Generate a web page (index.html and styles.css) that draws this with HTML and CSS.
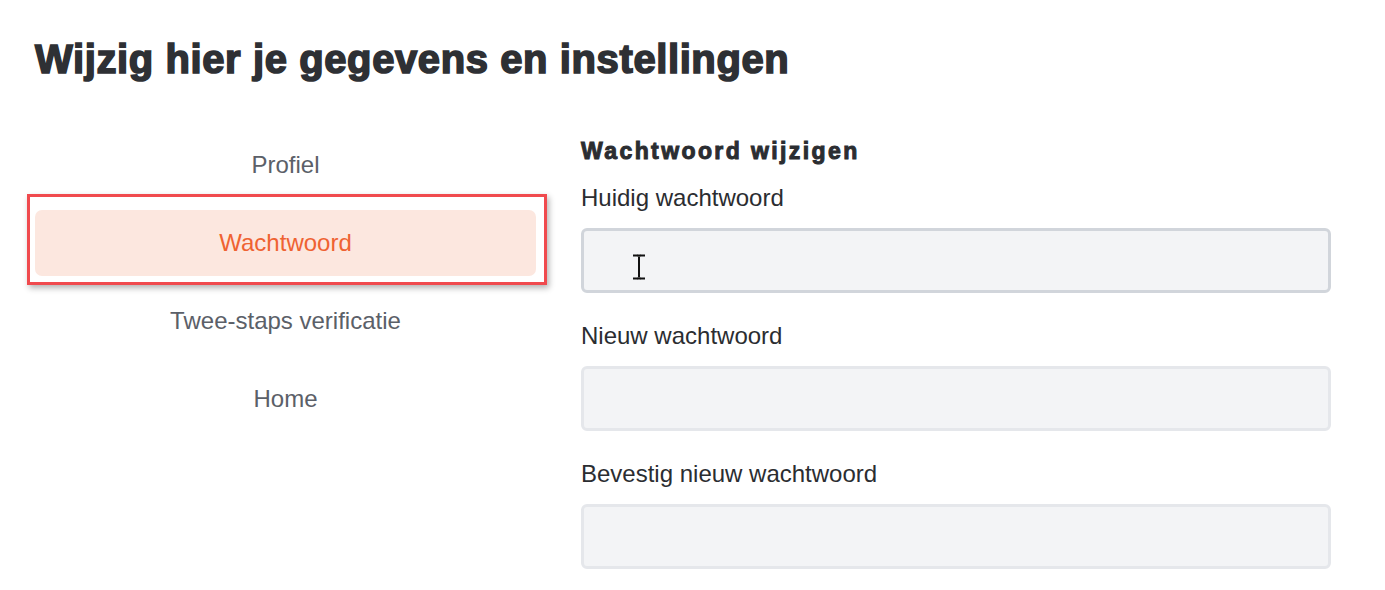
FILE: index.html
```html
<!DOCTYPE html>
<html lang="nl">
<head>
<meta charset="utf-8">
<title>Instellingen</title>
<link rel="stylesheet" href="styles.css">
</head>
<body>
<div class="page">
  <h1 class="title">Wijzig hier je gegevens en instellingen</h1>
  <div class="layout">
    <nav class="nav">
      <a class="nav-item">Profiel</a>
      <a class="nav-item active">Wachtwoord<span class="highlight"></span></a>
      <a class="nav-item">Twee-staps verificatie</a>
      <a class="nav-item">Home</a>
    </nav>
    <form class="form">
      <h2 class="section-title">Wachtwoord wijzigen</h2>
      <div class="field">
        <label class="label">Huidig wachtwoord</label>
        <div class="input-wrap">
          <input class="input focused" type="password">
          <svg class="cursor" width="14" height="26" viewBox="0 0 14 26"><path d="M1 1.5h4.5M8.5 1.5H13M1 24.5h4.5M8.5 24.5H13M7 2.5v21" stroke="#111" stroke-width="2" fill="none"/><path d="M5 1.5h4M5 24.5h4" stroke="#111" stroke-width="2"/></svg>
        </div>
      </div>
      <div class="field">
        <label class="label">Nieuw wachtwoord</label>
        <input class="input" type="password">
      </div>
      <div class="field">
        <label class="label">Bevestig nieuw wachtwoord</label>
        <input class="input" type="password">
      </div>
    </form>
  </div>
</div>
</body>
</html>
```
FILE: styles.css
```css
* { box-sizing: border-box; }
html, body { margin: 0; padding: 0; background: #fff; }
body { font-family: "Liberation Sans", Arial, sans-serif; color: #2b2d31; overflow: hidden; }
.page { padding: 36px 54px 0 35px; }
.title {
  margin: 0;
  font-size: 40px;
  line-height: 46px;
  font-weight: 700;
  color: #2e3034;
  -webkit-text-stroke: 1.6px #2e3034;
  letter-spacing: 0.6px;
}
.layout { display: flex; gap: 45px; margin-top: 50px; }
.nav { width: 501px; display: flex; flex-direction: column; gap: 12px; }
.nav-item {
  position: relative;
  height: 66px;
  display: flex;
  align-items: center;
  justify-content: center;
  font-size: 24px;
  color: #5b6068;
  border-radius: 7px;
  cursor: pointer;
}
.nav-item.active { background: #fce7df; color: #ef6232; }
.highlight {
  position: absolute;
  left: -8px; right: -11px; top: -16px; bottom: -9px;
  border: 3px solid #f04a4e;
  box-shadow: 2px 3px 6px rgba(0,0,0,0.3);
  pointer-events: none;
}
.form { flex: 1; margin: 0; padding-top: 6px; }
.section-title {
  margin: 0 0 20px;
  font-size: 23px;
  line-height: 26px;
  font-weight: 700;
  color: #2b2d31;
  -webkit-text-stroke: 1px #2b2d31;
  letter-spacing: 2.4px;
}
.field { display: flex; flex-direction: column; margin-bottom: 29px; }
.label { font-size: 24px; line-height: 28px; margin-bottom: 16px; color: #2b2d31; }
.input-wrap { position: relative; }
.input {
  display: block;
  width: 100%;
  height: 65px;
  background: #f3f4f6;
  border: 3px solid #e5e7eb;
  border-radius: 6px;
  outline: none;
  font-size: 20px;
  padding: 0 16px;
}
.input.focused { border-color: #d1d5db; }
.cursor { position: absolute; left: 51px; top: 26px; }
```
